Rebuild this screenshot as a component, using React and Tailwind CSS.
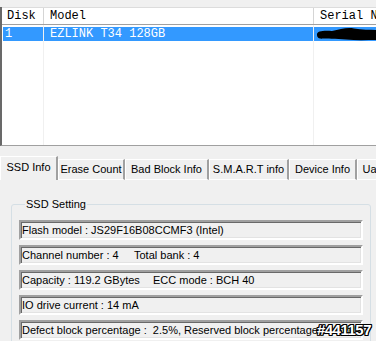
const ui = "font-['Liberation_Sans',Arial,sans-serif]";
const mono = "font-['Liberation_Mono','Courier_New',monospace]";

const tabs = [
  { label: "SSD Info", w: "w-[58px]", active: true },
  { label: "Erase Count", w: "w-[67px]" },
  { label: "Bad Block Info", w: "w-[84px]" },
  { label: "S.M.A.R.T info", w: "w-[80px]" },
  { label: "Device Info", w: "w-[68px]" },
  { label: "Uart Setting", w: "w-[70px]" },
];

function Field({ children }) {
  return (
    <div className="flex h-[20px] items-center whitespace-pre border-2 border-t-[#a0a0a0] border-l-[#a0a0a0] border-b-white border-r-white pl-[1px] text-[11px] leading-none text-black shadow-[inset_1px_1px_0_#696969,inset_-1px_-1px_0_#e3e3e3]">
      {children}
    </div>
  );
}

function Scribble() {
  return (
    <svg width="62" height="14" viewBox="0 0 62 14" className="block">
      <path
        d="M3 7.5C3 4 9 3.5 18 4C26 2.5 33 0 40 1.5C48 3 56 2.5 62 3L62 13C52 13 42 13.5 32 12.5C22 11.5 12 12 6 11.5C3.5 11 3 9.5 3 7.5Z"
        fill="#000"
      />
    </svg>
  );
}

export default function App() {
  return (
    <div className={`relative h-[341px] w-[376px] overflow-hidden bg-[#f0f0f0] ${ui}`}>
      <div className="h-[7px]" />

      {/* disk list */}
      <div className="flex h-[139px] flex-col border-l-2 border-b border-l-[#696969] border-b-[#a0a0a0] bg-white">
        <div className={`flex h-[18px] border-y border-t-[#dcdcdc] border-b-[#a0a0a0] text-[12px] text-black ${mono}`}>
          <div className="flex w-[42px] shrink-0 items-center border-r border-[#d5d5d5] pl-[5px]">Disk</div>
          <div className="flex w-[270px] shrink-0 items-center border-r border-[#d5d5d5] pl-[6px]">Model</div>
          <div className="flex min-w-0 flex-1 items-center overflow-hidden whitespace-nowrap pl-[6px]">Serial No</div>
        </div>
        <div className={`flex flex-1 text-[12px] text-white ${mono}`}>
          <div className="w-[42px] shrink-0 border-r border-[#f0f0f0] pl-[1px]">
            <div className="mt-[2px] flex h-[14px] items-center bg-[#3399ff] pl-[2px]">1</div>
          </div>
          <div className="w-[270px] shrink-0 border-r border-[#f0f0f0]">
            <div className="mt-[2px] flex h-[14px] items-center whitespace-pre bg-[#3399ff] pl-[6px]">EZLINK T34 128GB</div>
          </div>
          <div className="min-w-0 flex-1 overflow-hidden">
            <div className="mt-[2px] h-[14px] bg-[#3399ff]">
              <Scribble />
            </div>
          </div>
        </div>
      </div>

      {/* tabs */}
      <div className="mt-[10px] flex h-[24px] items-end text-[11px] text-black">
        {tabs.map((t) => (
          <div
            key={t.label}
            className={`flex shrink-0 items-center overflow-hidden whitespace-nowrap border-t border-l border-r-2 border-t-white border-l-white border-r-[#a0a0a0] bg-[#f0f0f0] ${t.w} ${
              t.active ? "h-[24px] justify-center pb-[3px]" : "h-[21px] justify-center border-b border-b-white"
            }`}
          >
            {t.label}
          </div>
        ))}
      </div>

      {/* panel */}
      <div className="h-[200px] pt-[17px]">
        <fieldset className="ml-[11px] w-[360px] rounded-[3px] border border-[#d5dfe5] px-[7px] pb-[8px]">
          <legend className="ml-[6px] px-[1px] text-[11px] leading-[15px] text-black">SSD Setting</legend>
          <div className="mt-[8px] flex flex-col gap-[5px]">
            <Field>Flash model : JS29F16B08CCMF3 (Intel)</Field>
            <Field>
              <span className="inline-block w-[112px]">Channel number : 4</span>
              <span>Total bank : 4</span>
            </Field>
            <Field>
              <span className="inline-block w-[131px]">Capacity : 119.2 GBytes</span>
              <span>ECC mode : BCH 40</span>
            </Field>
            <Field>IO drive current : 14 mA</Field>
            <Field>Defect block percentage :  2.5%, Reserved block percentage : 6.8%</Field>
          </div>
        </fieldset>
      </div>

      <div className="absolute bottom-[4px] right-[5px] text-[15px] font-bold leading-none tracking-[-0.5px] text-white [text-shadow:1px_0_0_#000,-1px_0_0_#000,0_1px_0_#000,0_-1px_0_#000,1px_1px_0_#000,-1px_-1px_0_#000,1px_-1px_0_#000,-1px_1px_0_#000]">
        #441157
      </div>
    </div>
  );
}
